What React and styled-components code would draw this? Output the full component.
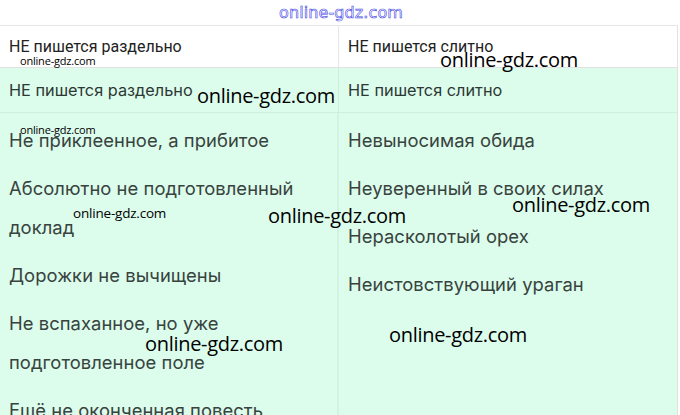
import React from "react";
import styled, { createGlobalStyle } from "styled-components";

const Global = createGlobalStyle`
  html, body { margin: 0; padding: 0; background: #fff; }
  body { font-family: Inter, "Noto Sans", sans-serif; overflow: hidden; }
  * { box-sizing: border-box; }
`;

const Page = styled.div`
  position: relative;
  width: 680px;
  height: 415px;
  overflow: hidden;
`;

const LogoBar = styled.div`
  height: 25px;
  display: flex;
  align-items: center;
  justify-content: center;
  padding-left: 2px;
`;

const Logo = styled.span`
  font-family: "DejaVu Sans", sans-serif;
  font-size: 16px;
  letter-spacing: 0.1px;
  color: #fff;
  -webkit-text-stroke: 0.6px #4446e6;
  line-height: 1;
`;

const Table = styled.div`
  width: 678px;
  border-top: 1px solid #e6e6e6;
  border-right: 1px solid #e2e2e2;
`;

const Row = styled.div`
  display: grid;
  grid-template-columns: 339px 1fr;
  background: ${(p) => (p.$green ? "#dcfcec" : "#fff")};
  border-bottom: 1px solid ${(p) => (p.$green ? "#cfeedd" : "#e2e2e2")};
`;

const HeadCell = styled.div`
  height: ${(p) => p.$h}px;
  display: flex;
  align-items: center;
  padding: 0 9px;
  font-family: ${(p) => (p.$narrow ? 'Roboto, "Liberation Sans", sans-serif' : 'Inter, "Noto Sans", sans-serif')};
  font-size: ${(p) => (p.$narrow ? 16 : 16.3)}px;
  color: ${(p) => (p.$narrow ? "#222" : "#2c3833")};
  border-right: ${(p) => (p.$last ? "none" : `1px solid ${p.$green ? "#cdeedd" : "#e6e6e6"}`)};
`;

const BodyCell = styled.div`
  padding: 8px 9px 0;
  min-height: 310px;
  border-right: ${(p) => (p.$last ? "none" : "2px solid #d3f3e2")};
`;

const Item = styled.p`
  margin: 0 0 9px;
  font-family: Inter, "Noto Sans", sans-serif;
  font-size: 18.4px;
  line-height: 39px;
  color: #38433e;
  letter-spacing: 0.05px;
`;

const Mark = styled.span`
  position: absolute;
  left: ${(p) => p.$x}px;
  top: ${(p) => p.$y}px;
  font-family: "Open Sans", "Noto Sans", sans-serif;
  font-size: ${(p) => p.$s}px;
  color: #000;
  line-height: 1;
  letter-spacing: ${(p) => (p.$s > 15 ? "-0.3px" : "-0.2px")};
  white-space: nowrap;
`;

const left = [
  "Не приклеенное, а прибитое",
  "Абсолютно не подготовленный доклад",
  "Дорожки не вычищены",
  "Не вспаханное, но уже подготовленное поле",
  "Ещё не оконченная повесть",
];
const right = [
  "Невыносимая обида",
  "Неуверенный в своих силах",
  "Нерасколотый орех",
  "Неистовствующий ураган",
];

const marks = [
  { x: 20, y: 55, s: 11 },
  { x: 440, y: 50, s: 20 },
  { x: 197, y: 86, s: 20 },
  { x: 20, y: 124, s: 11 },
  { x: 73, y: 207, s: 13.5 },
  { x: 268, y: 206, s: 20 },
  { x: 512, y: 195, s: 20 },
  { x: 145, y: 334, s: 20 },
  { x: 389, y: 325, s: 20 },
];

export default function App() {
  return (
    <Page>
      <Global />
      <LogoBar>
        <Logo>online-gdz.com</Logo>
      </LogoBar>
      <Table>
        <Row>
          <HeadCell $h={41} $narrow>НЕ пишется раздельно</HeadCell>
          <HeadCell $h={41} $narrow $last>НЕ пишется слитно</HeadCell>
        </Row>
        <Row $green>
          <HeadCell $h={44} $green>НЕ пишется раздельно</HeadCell>
          <HeadCell $h={44} $green $last>НЕ пишется слитно</HeadCell>
        </Row>
        <Row $green>
          <BodyCell>
            {left.map((t) => (
              <Item key={t}>{t}</Item>
            ))}
          </BodyCell>
          <BodyCell $last>
            {right.map((t) => (
              <Item key={t}>{t}</Item>
            ))}
          </BodyCell>
        </Row>
      </Table>
      {marks.map((m, i) => (
        <Mark key={i} $x={m.x} $y={m.y} $s={m.s}>
          online-gdz.com
        </Mark>
      ))}
    </Page>
  );
}
